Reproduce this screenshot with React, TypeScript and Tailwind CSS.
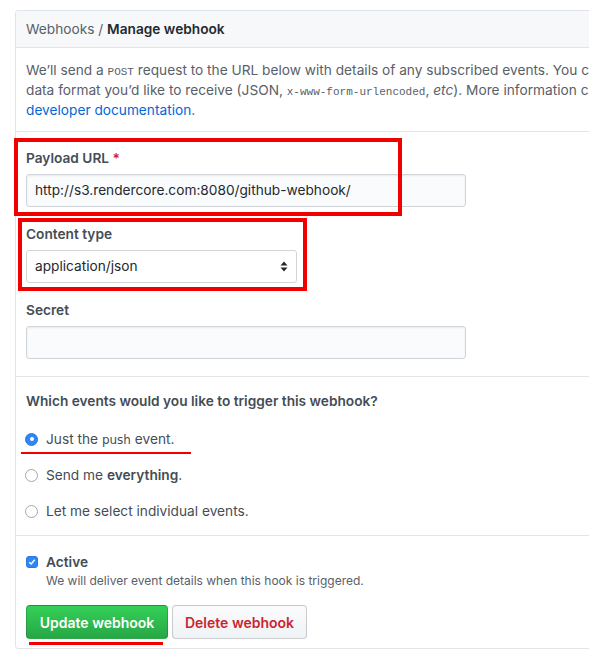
import React from "react";

function Radio({ checked }: { checked?: boolean }) {
  if (checked) {
    return (
      <span className="w-[13px] h-[13px] rounded-full bg-[#2f86f6] border border-[#2a78de] flex items-center justify-center shrink-0">
        <span className="w-[4px] h-[4px] rounded-full bg-white" />
      </span>
    );
  }
  return <span className="w-[13px] h-[13px] rounded-full bg-white border border-[#a8a8a8] shrink-0" />;
}

export default function App() {
  return (
    <div className="relative w-[589px] h-[651px] overflow-hidden bg-white font-['Inter','Liberation_Sans',Arial,sans-serif] text-[13.7px]">
      <div className="ml-[15px] mt-[10px] w-[800px] border border-[#e1e4e8] rounded-[3px]">
        {/* header */}
        <div className="h-[37px] bg-[#f6f8fa] border-b border-[#e1e4e8] rounded-t-[3px] flex items-center px-[10px]">
          <span className="text-[#586069]">Webhooks /&nbsp;</span>
          <span className="font-semibold text-[#24292e]">Manage webhook</span>
        </div>

        {/* description */}
        <div className="pt-[12px] pb-[11px] px-[10px] leading-[20px] text-[#586069] border-b border-[#e1e4e8] whitespace-nowrap">
          We’ll send a <span className="font-['Liberation_Mono',monospace] text-[11px] leading-none">POST</span> request to the URL below with details of any subscribed events. You can also specify which
          <br />
          data format you’d like to receive (JSON,{" "}
          <span className="font-['Liberation_Mono',monospace] text-[11px] leading-none">x-www-form-urlencoded</span>,{" "}
          <i>etc</i>). More information can be found in our
          <br />
          <span className="text-[#0366d6]">developer documentation</span>.
        </div>

        {/* form fields */}
        <div className="pt-[16px] pb-[17px] px-[10px] border-b border-[#e1e4e8] flex flex-col">
          <div className="flex flex-col">
            <div className="h-[20px] leading-[20px] font-semibold text-[#444d56]">
              Payload URL <span className="text-[#cb2431]">*</span>
            </div>
            <div className="mt-[6px] w-[440px] h-[33px] bg-[#fafbfc] border border-[#d1d5da] rounded-[3px] flex items-center px-[8px] text-[#24292e] shadow-[inset_0_1px_2px_rgba(27,31,35,0.075)]">
              http://s3.rendercore.com:8080/github-webhook/
            </div>
          </div>
          <div className="flex flex-col mt-[17px]">
            <div className="h-[20px] leading-[20px] font-semibold text-[#444d56]">Content type</div>
            <div className="mt-[6px] w-[271px] h-[33px] bg-white border border-[#d1d5da] rounded-[3px] flex items-center justify-between pl-[8px] pr-[8px] text-[#24292e]">
              <span>application/json</span>
              <svg width="8" height="11" viewBox="0 0 8 11">
                <path d="M4 0.5 L7.5 4.5 L0.5 4.5 Z" fill="#24292e" />
                <path d="M4 10.5 L7.5 6.5 L0.5 6.5 Z" fill="#24292e" />
              </svg>
            </div>
          </div>
          <div className="flex flex-col mt-[17px]">
            <div className="h-[20px] leading-[20px] font-semibold text-[#444d56]">Secret</div>
            <div className="mt-[6px] w-[440px] h-[33px] bg-[#fafbfc] border border-[#d1d5da] rounded-[3px] shadow-[inset_0_1px_2px_rgba(27,31,35,0.075)]" />
          </div>
        </div>

        {/* events */}
        <div className="pt-[14px] pb-[14px] px-[10px] border-b border-[#e1e4e8] flex flex-col">
          <div className="h-[20px] leading-[20px] font-semibold text-[#444d56]">
            Which events would you like to trigger this webhook?
          </div>
          <div className="mt-[18px] flex flex-col gap-[16px] text-[#444d56]">
            <div className="h-[20px] flex items-center gap-[8px] -ml-[1px]">
              <Radio checked />
              <span>
                Just the <span className="font-['DejaVu_Sans',sans-serif] text-[12px] leading-none">push</span> event.
              </span>
            </div>
            <div className="h-[20px] flex items-center gap-[8px] -ml-[1px]">
              <Radio />
              <span>
                Send me <span className="font-semibold">everything</span>.
              </span>
            </div>
            <div className="h-[20px] flex items-center gap-[8px] -ml-[1px]">
              <Radio />
              <span>Let me select individual events.</span>
            </div>
          </div>
        </div>

        {/* active + buttons */}
        <div className="pt-[16px] pb-[9px] px-[10px] flex flex-col">
          <div className="flex items-start gap-[8px]">
            <span className="mt-[4px] w-[12px] h-[12px] rounded-[3px] bg-[#2f86f6] border border-[#2a78de] flex items-center justify-center shrink-0">
              <svg width="8" height="8" viewBox="0 0 8 8">
                <path d="M1.3 4.2 L3.2 6 L6.7 1.8" stroke="white" strokeWidth="1.4" fill="none" />
              </svg>
            </span>
            <div className="flex flex-col">
              <span className="h-[20px] leading-[20px] font-semibold text-[#444d56]">Active</span>
              <span className="text-[12px] leading-[18px] text-[#586069]">
                We will deliver event details when this hook is triggered.
              </span>
            </div>
          </div>
          <div className="mt-[15px] flex gap-[4px]">
            <button className="h-[34px] w-[142px] rounded-[4px] border border-[rgba(27,31,35,0.2)] bg-gradient-to-b from-[#34d058] to-[#28a745] text-white font-semibold text-[14px]">
              Update webhook
            </button>
            <button className="h-[34px] w-[135px] rounded-[4px] border border-[rgba(27,31,35,0.2)] bg-gradient-to-b from-[#fafbfc] to-[#eff3f6] text-[#cb2431] font-semibold text-[14px]">
              Delete webhook
            </button>
          </div>
        </div>
      </div>

      {/* red annotations */}
      <div className="absolute left-[14px] top-[138px] w-[388px] h-[78px] border-[4px] border-[#f20000]" />
      <div className="absolute left-[18px] top-[218px] w-[289px] h-[73px] border-[4px] border-[#f20000]" />
      <div className="absolute left-[21px] top-[452px] w-[170px] h-[2px] bg-[#f20000]" />
      <div className="absolute left-[29px] top-[642px] w-[134px] h-[3px] bg-[#f20000]" />
    </div>
  );
}
